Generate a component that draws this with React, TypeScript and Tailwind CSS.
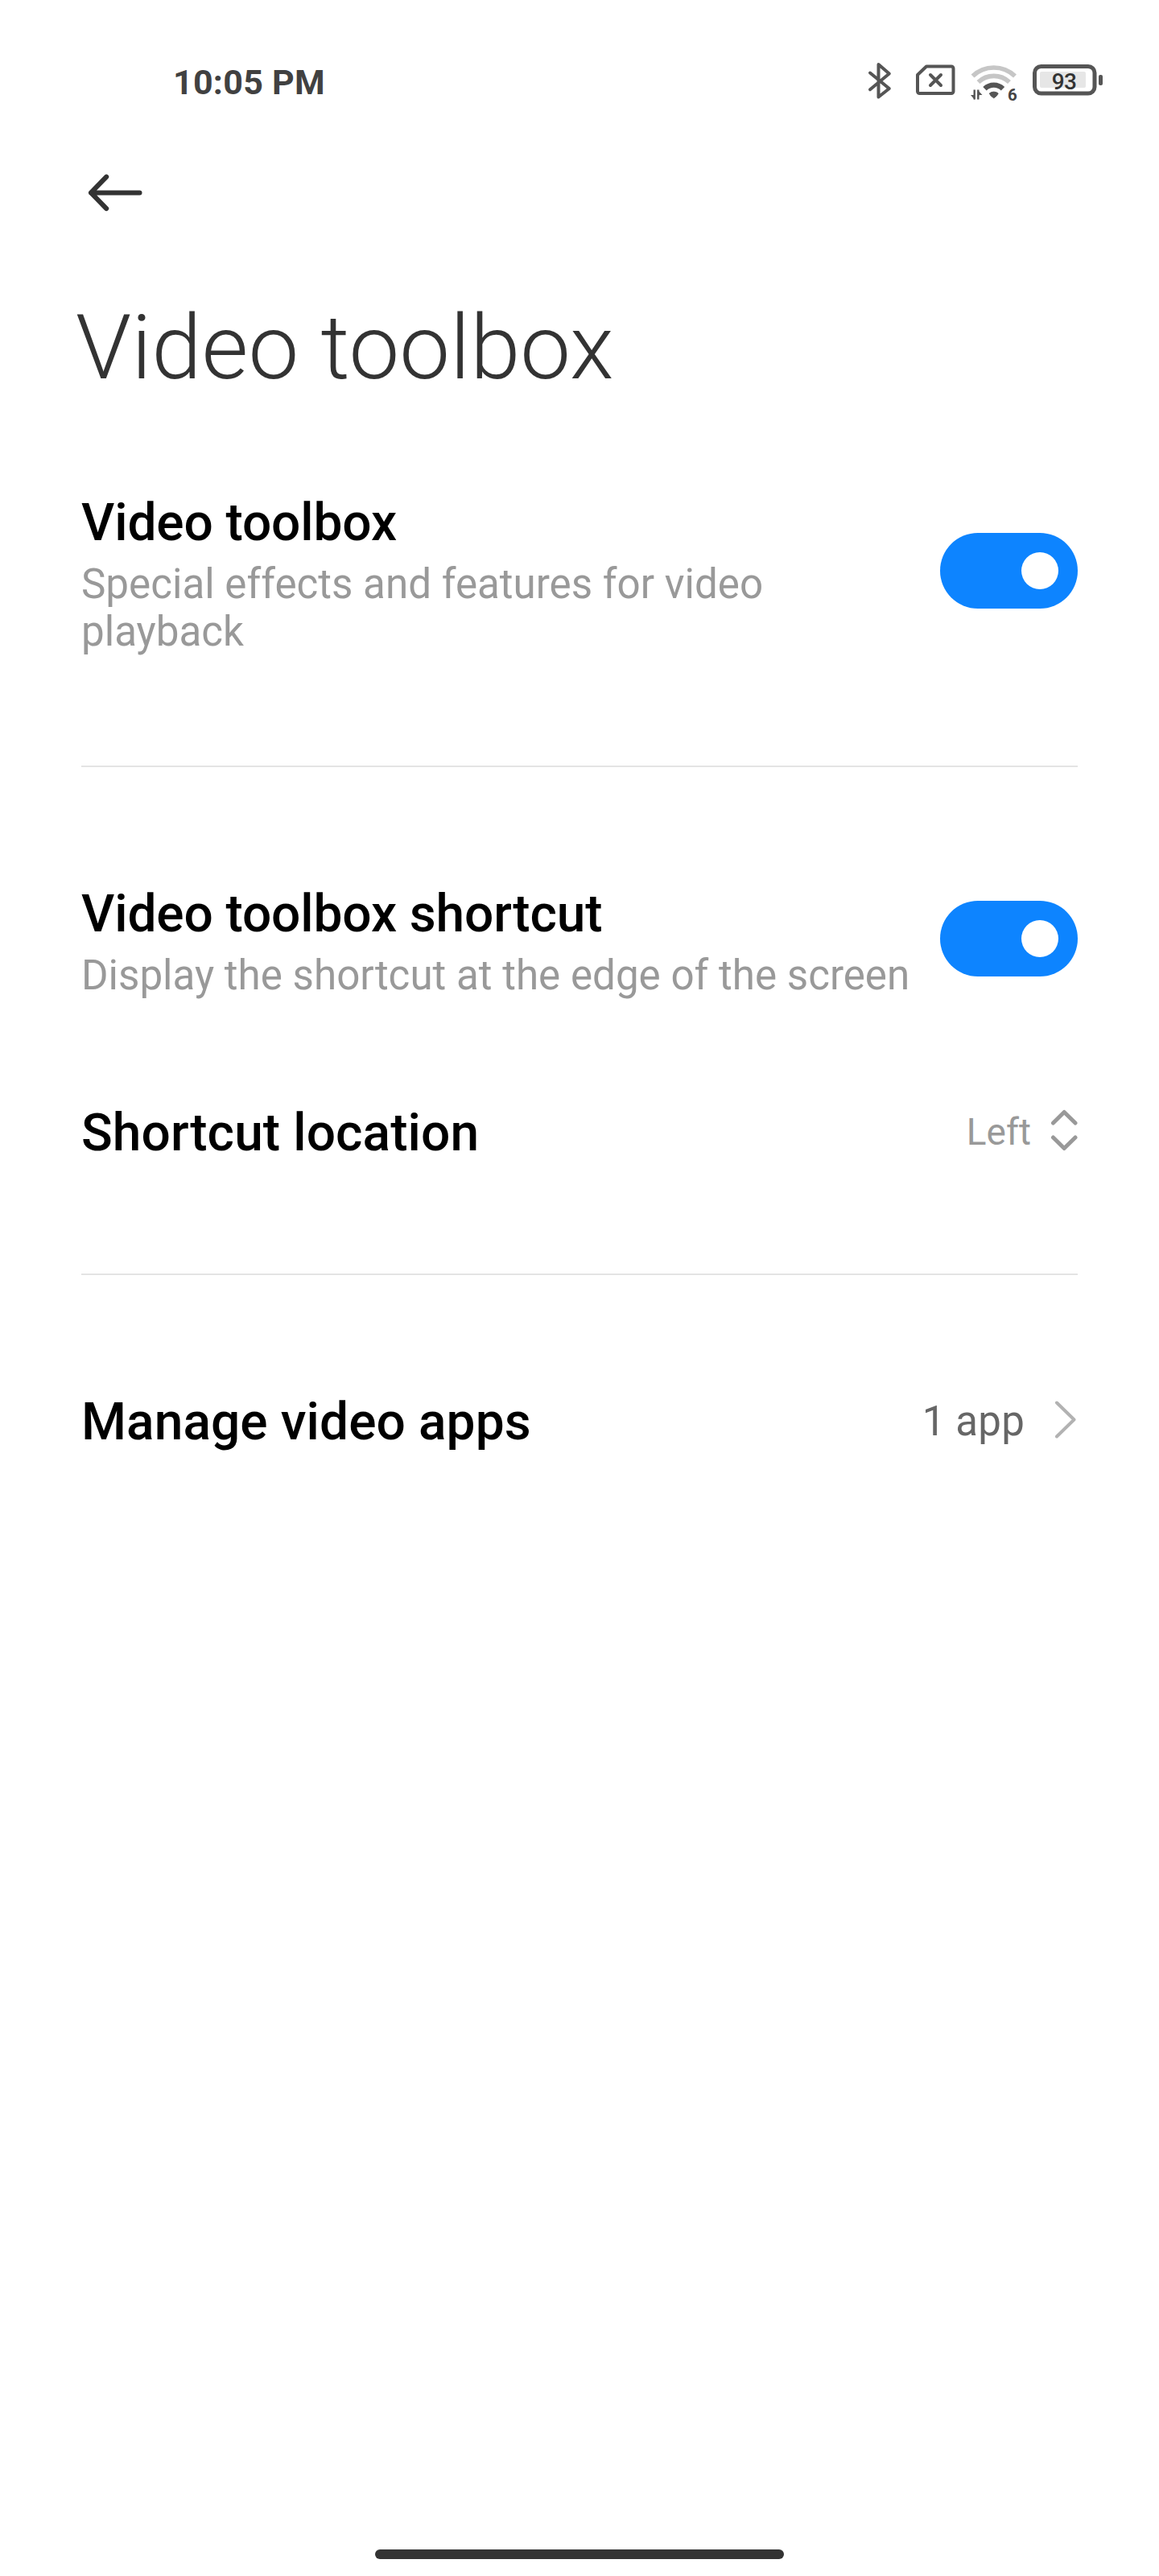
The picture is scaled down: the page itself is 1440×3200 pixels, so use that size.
import React from 'react';

interface SwitchRowProps {
    title: string;
    description: string;
}

const Switch: React.FC = () => (
    <div role="switch" aria-checked="true" className="-mt-2 flex h-[94px] w-[171px] shrink-0 items-center justify-end rounded-full bg-[#0d84ff] pr-6">
        <span className="size-[46px] rounded-full bg-white" />
    </div>
);

const SwitchRow: React.FC<SwitchRowProps> = ({ title, description }) => (
    <div className="flex items-center justify-between">
        <div className="w-[1036px]">
            <h2 className="text-[64px] leading-[75px] font-medium tracking-[-0.12px]">{title}</h2>
            <p className="mt-[9px] text-[51.15px] leading-[59px] text-[#999999]">{description}</p>
        </div>
        <Switch />
    </div>
);

const StatusIcons: React.FC = () => (
    <svg width="330" height="80" viewBox="0 0 330 80" fill="none" className="mt-[60px]">
        {/* Bluetooth */}
        <path d="M21 30.5 44.8 50 31.5 60.5V20L44.8 31.5 21 51.2" stroke="#555" strokeWidth="4" strokeLinecap="round" strokeLinejoin="round" />
        {/* No SIM */}
        <path d="M91 22.5h31a2.5 2.5 0 0 1 2.5 2.5v28.5a2.5 2.5 0 0 1-2.5 2.5H82.5a2.5 2.5 0 0 1-2.5-2.5V33z" stroke="#555" strokeWidth="4" strokeLinejoin="round" />
        <path d="m96 33 13 13M109 33 96 46" stroke="#555" strokeWidth="4" strokeLinecap="round" />
        {/* Wi-Fi */}
        <path d="M148.5 34.5a38 38 0 0 1 52.5 0" stroke="#c6c6c6" strokeWidth="5.7" />
        <path d="M155.5 42a28 28 0 0 1 38.5 0" stroke="#c6c6c6" strokeWidth="5.7" />
        <path d="M163.5 50.3a16 16 0 0 1 22.5 0" stroke="#555" strokeWidth="6.3" />
        <path d="M169.3 56a8 7 0 0 1 10.9 0q-1.2 3.5-5.450 5.8-4.250-2.3-5.450-5.8z" fill="#555" stroke="#555" strokeLinejoin="round" />
        {/* Data direction arrows */}
        <path d="M150.7 51.5v12M155.3 51.5v12" stroke="#555" strokeWidth="2.4" />
        <path d="M151 52v12l-5-6h4zM155 64V52l5.5 6h-4z" fill="#555" />
        <text x="192" y="64.8" fontSize="20.5" fontWeight="700" fill="#444">6</text>
        {/* Battery */}
        <rect x="225.5" y="22.5" width="74.5" height="33.5" rx="8" stroke="#555" strokeWidth="5" />
        <rect x="232" y="29" width="57" height="20" rx="2" fill="#e6e6e6" />
        <rect x="305" y="33" width="5" height="13" rx="2" fill="#555" />
        <text x="262" y="50.8" fontSize="28" fontWeight="500" letterSpacing="-0.6" textAnchor="middle" fill="#333">93</text>
    </svg>
);

const App: React.FC = () => {
    return (
        <div className="flex h-[3200px] w-[1440px] flex-col bg-white font-[Roboto,sans-serif] text-black">
            {/* Status bar */}
            <header className="flex h-[140px] items-start justify-between pr-[50px] pl-[215px]">
                <span className="mt-[77px] text-[43px] leading-[50px] font-bold tracking-[0.25px] text-[#414141]">10:05 PM</span>
                <StatusIcons />
            </header>

            <button aria-label="Back" className="mt-[70px] ml-[100px] h-[60px] w-[90px]">
                <svg width="90" height="60" viewBox="0 0 90 60" fill="none" stroke="#333" strokeWidth="6" strokeLinecap="round" strokeLinejoin="round">
                    <path d="M32.2 9.7 13 29.4l19.2 19.7M13 29.4h60.5" />
                </svg>
            </button>

            <main className="flex grow flex-col px-[101px]">
                <h1 className="mt-[96px] -ml-[7px] text-[112px] leading-[132px] font-light text-[#333333]">Video toolbox</h1>

                <section className="mt-[114px] h-[341px] border-b-2 border-[#e4e4e4]">
                    <SwitchRow title="Video toolbox" description="Special effects and features for video playback" />
                </section>

                <section className="flex h-[631px] flex-col border-b-2 border-[#e4e4e4] pt-[145px]">
                    <SwitchRow title="Video toolbox shortcut" description="Display the shortcut at the edge of the screen" />
                    <div className="mt-[129px] flex items-center justify-between">
                        <h2 className="text-[64px] leading-[75px] font-medium tracking-[0.1px]">Shortcut location</h2>
                        <div className="-mt-1 flex items-center gap-[22px] text-[46px] leading-[54px] text-[#999999]">
                            <span>Left</span>
                            <svg width="36" height="60" viewBox="0 0 36 60" fill="none" stroke="#999" strokeWidth="5" strokeLinecap="round" strokeLinejoin="round">
                                <path d="m5.5 19 13.7-13.5L33 19M5.5 37l13.7 13.5L33 37" />
                            </svg>
                        </div>
                    </div>
                </section>

                <section className="flex items-center justify-between pt-[145px]">
                    <h2 className="text-[64px] leading-[75px] font-medium tracking-[0.1px]">Manage video apps</h2>
                    <div className="-mt-1 flex items-center gap-9 text-[51px] leading-[59px] text-[#666666]">
                        <span className="pt-0.5 tracking-[0.2px]">1 app</span>
                        <svg width="30" height="60" viewBox="0 0 30 60" fill="none" stroke="#b2b2b2" strokeWidth="4" strokeLinecap="round" strokeLinejoin="round">
                            <path d="m4 7.5 21.500 21L4 49.5" />
                        </svg>
                    </div>
                </section>
            </main>

            {/* Gesture bar */}
            <div className="mb-[21px] h-3 w-[508px] self-center rounded-full bg-[#333333]" />
        </div>
    );
};

export default App;
